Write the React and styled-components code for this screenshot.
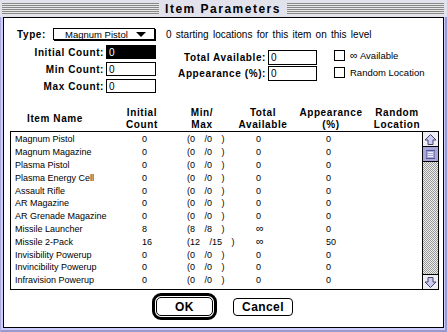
import React from 'react';
import styled, { createGlobalStyle } from 'styled-components';

const GlobalStyle = createGlobalStyle`
  html, body { margin: 0; padding: 0; }
  body { background: #ccccff; font-family: "Liberation Sans", Arial, sans-serif; color: #000; }
  * { box-sizing: border-box; }
`;

const Window = styled.div`
  width: 447px;
  height: 332px;
  background: #ccccff;
  display: flex;
  flex-direction: column;
  box-shadow: inset 1px 0 0 #aaaadd, inset -2px -2px 0 #9999cc;
`;

const TitleBar = styled.div`
  height: 17px;
  display: flex;
  align-items: flex-start;
  gap: 6px;
  padding: 3px 3px 0 2px;
  background: #e2e2ec;
`;

const Stripes = styled.div`
  flex: 1;
  height: 12px;
  background: repeating-linear-gradient(to bottom, #888888 0 1px, #e6e6e6 1px 2px);
`;

const Title = styled.div`
  font: bold 12px "Liberation Sans", Arial, sans-serif;
  letter-spacing: 1.5px;
  line-height: 12px;
  white-space: nowrap;
`;

const Content = styled.div`
  flex: 1;
  margin: 0 3px 4px 3px;
  border: 1px solid #000;
  background: #fff;
  display: flex;
  flex-direction: column;
`;

const BoldLabel = styled.span`
  font: bold 10px "Liberation Sans", Arial, sans-serif;
  letter-spacing: 0.6px;
  white-space: nowrap;
`;

const PlainText = styled.span`
  font: ${(p) => p.$size || 9}px "Liberation Sans", Arial, sans-serif;
  word-spacing: ${(p) => p.$wordGap || 0}px;
  white-space: nowrap;
`;

const InfinityMark = styled.span`
  font-size: 11px;
  line-height: 9px;
`;

const TopRow = styled.div`
  margin-top: 10px;
  height: 12px;
  display: flex;
  align-items: center;
  padding-left: 13px;
`;

const TypeLabel = styled(BoldLabel)`
  width: 36px;
`;

const Popup = styled.div`
  width: 102px;
  height: 12px;
  border: 1px solid #000;
  box-shadow: 1px 1px 0 #000;
  display: flex;
  align-items: center;
  justify-content: space-between;
  padding: 0 8px 0 11px;
  font: 9.5px "Liberation Sans", Arial, sans-serif;
`;

const InfoText = styled(PlainText)`
  margin-left: 11px;
`;

const Middle = styled.div`
  margin-top: 5px;
  display: flex;
  align-items: flex-start;
`;

const FieldGrid = styled.div`
  display: grid;
  grid-template-columns: ${(p) => p.$cols};
  grid-auto-rows: ${(p) => p.$row}px;
  column-gap: 2px;
  row-gap: ${(p) => p.$gap}px;
  margin-top: ${(p) => p.$top || 0}px;
  align-items: center;
`;

const FieldLabel = styled(BoldLabel)`
  justify-self: end;
`;

const Field = styled.div`
  height: 100%;
  border: 1px solid #000;
  background: ${(p) => (p.$selected ? '#000' : '#fff')};
  color: ${(p) => (p.$selected ? '#fff' : '#000')};
  font: 10px "Liberation Sans", Arial, sans-serif;
  line-height: 12px;
  padding: 1px 0 0 2px;
`;

const Checks = styled.div`
  margin: 5px 0 0 17px;
  display: flex;
  flex-direction: column;
  gap: 6px;
`;

const CheckRow = styled.div`
  display: flex;
  align-items: center;
  height: 11px;
  gap: 5px;
`;

const Box = styled.div`
  width: 11px;
  height: 11px;
  border: 1px solid #000;
  background: #fff;
`;

const HeaderRow = styled.div`
  margin: 14px 0 0 6px;
  height: 24px;
  display: grid;
  grid-template-columns: 90px 84px 36px 86px 50px 82px;
  align-items: center;
`;

const HeaderCell = styled.div`
  display: flex;
  justify-content: center;
  text-align: center;
  font: bold 10px "Liberation Sans", Arial, sans-serif;
  letter-spacing: 0.6px;
  line-height: 12px;
  white-space: pre;
`;

const ListBox = styled.div`
  margin: 0 4px 0 6px;
  height: 159px;
  border: 1px solid #000;
  display: flex;
`;

const Rows = styled.div`
  flex: 1;
  padding-top: 1px;
  overflow: hidden;
`;

const Row = styled.div`
  height: 12.8px;
  display: grid;
  grid-template-columns: 127px 45px 69px 70px 1fr;
  align-items: center;
  padding-left: 4px;
  font: 9px "Liberation Sans", Arial, sans-serif;
  line-height: 12px;
  white-space: pre;
`;

const MinMax = styled.span`
  word-spacing: 7px;
`;

const ScrollBar = styled.div`
  width: 16px;
  border-left: 1px solid #000;
  display: flex;
  flex-direction: column;
`;

const ArrowBox = styled.div`
  height: 15px;
  background: #eeeef4;
  border-${(p) => (p.$down ? 'top' : 'bottom')}: 1px solid #000;
  display: flex;
  align-items: center;
  justify-content: center;
`;

const Thumb = styled.div`
  height: 15px;
  background: #a8a8dc;
  border-bottom: 1px solid #000;
  display: flex;
  align-items: center;
  justify-content: center;
`;

const Track = styled.div`
  flex: 1;
  background: repeating-conic-gradient(#999999 0 25%, #eeeeee 0 50%) 0 0 / 2px 2px;
`;

const ButtonRow = styled.div`
  margin: 3px 0 0 148px;
  display: flex;
  align-items: center;
  gap: 16px;
`;

const OkRing = styled.div`
  width: 65px;
  height: 27px;
  border: 3px solid #000;
  border-radius: 9px;
  padding: 1px;
`;

const ButtonFace = styled.div`
  height: 100%;
  width: 100%;
  border: 1px solid #000;
  border-radius: 5px;
  display: flex;
  align-items: center;
  justify-content: center;
  font: bold 12px "Liberation Sans", Arial, sans-serif;
  letter-spacing: 0.4px;
`;

const CancelButton = styled(ButtonFace)`
  width: 60px;
  height: 18px;
  border-radius: 4px;
`;

const items = [
  ['Magnum Pistol', '0', '0', '0', '0', '0'],
  ['Magnum Magazine', '0', '0', '0', '0', '0'],
  ['Plasma Pistol', '0', '0', '0', '0', '0'],
  ['Plasma Energy Cell', '0', '0', '0', '0', '0'],
  ['Assault Rifle', '0', '0', '0', '0', '0'],
  ['AR Magazine', '0', '0', '0', '0', '0'],
  ['AR Grenade Magazine', '0', '0', '0', '0', '0'],
  ['Missile Launcher', '8', '8', '8', '∞', '0'],
  ['Missile 2-Pack', '16', '12', '15', '∞', '50'],
  ['Invisibility Powerup', '0', '0', '0', '0', '0'],
  ['Invincibility Powerup', '0', '0', '0', '0', '0'],
  ['Infravision Powerup', '0', '0', '0', '0', '0'],
];

const Arrow = ({ down }) => (
  <svg width="13" height="13" viewBox="0 0 13 13" style={down ? { transform: 'rotate(180deg)' } : undefined}>
    <path d="M6.5 1.5 L12 7 H9 V11.5 H4 V7 H1 Z" fill="#ccccf4" stroke="#444466" strokeWidth="1" />
  </svg>
);

const Grip = () => (
  <svg width="9" height="9" viewBox="0 0 9 9">
    <rect x="0" y="0.5" width="9" height="8" fill="none" stroke="#555588" />
    <path d="M2 2.5 H7 M2 4.5 H7 M2 6.5 H7" stroke="#eeeeff" />
  </svg>
);

const DownTriangle = () => (
  <svg width="10" height="5" viewBox="0 0 10 5">
    <path d="M0 0 H10 L5 5 Z" fill="#000" />
  </svg>
);

export default function App() {
  return (
    <>
      <GlobalStyle />
      <Window>
        <TitleBar>
          <Stripes />
          <Title>Item Parameters</Title>
          <Stripes />
        </TitleBar>
        <Content>
          <TopRow>
            <TypeLabel>Type:</TypeLabel>
            <Popup>
              <span>Magnum Pistol</span>
              <DownTriangle />
            </Popup>
            <InfoText $size={10} $wordGap={1.5}>0 starting locations for this item on this level</InfoText>
          </TopRow>
          <Middle>
            <FieldGrid $cols="100px 50px" $row={14} $gap={3}>
              <FieldLabel>Initial Count:</FieldLabel>
              <Field $selected>0</Field>
              <FieldLabel>Min Count:</FieldLabel>
              <Field>0</Field>
              <FieldLabel>Max Count:</FieldLabel>
              <Field>0</Field>
            </FieldGrid>
            <FieldGrid $cols="110px 49px" $row={15} $gap={1} $top={5}>
              <FieldLabel>Total Available:</FieldLabel>
              <Field>0</Field>
              <FieldLabel>Appearance (%):</FieldLabel>
              <Field>0</Field>
            </FieldGrid>
            <Checks>
              <CheckRow>
                <Box />
                <PlainText $size={9.5}><InfinityMark>∞</InfinityMark> Available</PlainText>
              </CheckRow>
              <CheckRow>
                <Box />
                <PlainText $size={9.5}>Random Location</PlainText>
              </CheckRow>
            </Checks>
          </Middle>
          <HeaderRow>
            <HeaderCell>Item Name</HeaderCell>
            <HeaderCell>{'Initial\nCount'}</HeaderCell>
            <HeaderCell>{'Min/\nMax'}</HeaderCell>
            <HeaderCell>{'Total\nAvailable'}</HeaderCell>
            <HeaderCell>{'Appearance\n(%)'}</HeaderCell>
            <HeaderCell>{'Random\nLocation'}</HeaderCell>
          </HeaderRow>
          <ListBox>
            <Rows>
              {items.map(([name, init, min, max, total, app]) => (
                <Row key={name}>
                  <span>{name}</span>
                  <span>{init}</span>
                  <MinMax>{`(${min} /${max} )`}</MinMax>
                  <span>{total === '∞' ? <InfinityMark>∞</InfinityMark> : total}</span>
                  <span>{app}</span>
                </Row>
              ))}
            </Rows>
            <ScrollBar>
              <ArrowBox>
                <Arrow />
              </ArrowBox>
              <Thumb>
                <Grip />
              </Thumb>
              <Track />
              <ArrowBox $down>
                <Arrow down />
              </ArrowBox>
            </ScrollBar>
          </ListBox>
          <ButtonRow>
            <OkRing>
              <ButtonFace>OK</ButtonFace>
            </OkRing>
            <CancelButton>Cancel</CancelButton>
          </ButtonRow>
        </Content>
      </Window>
    </>
  );
}
